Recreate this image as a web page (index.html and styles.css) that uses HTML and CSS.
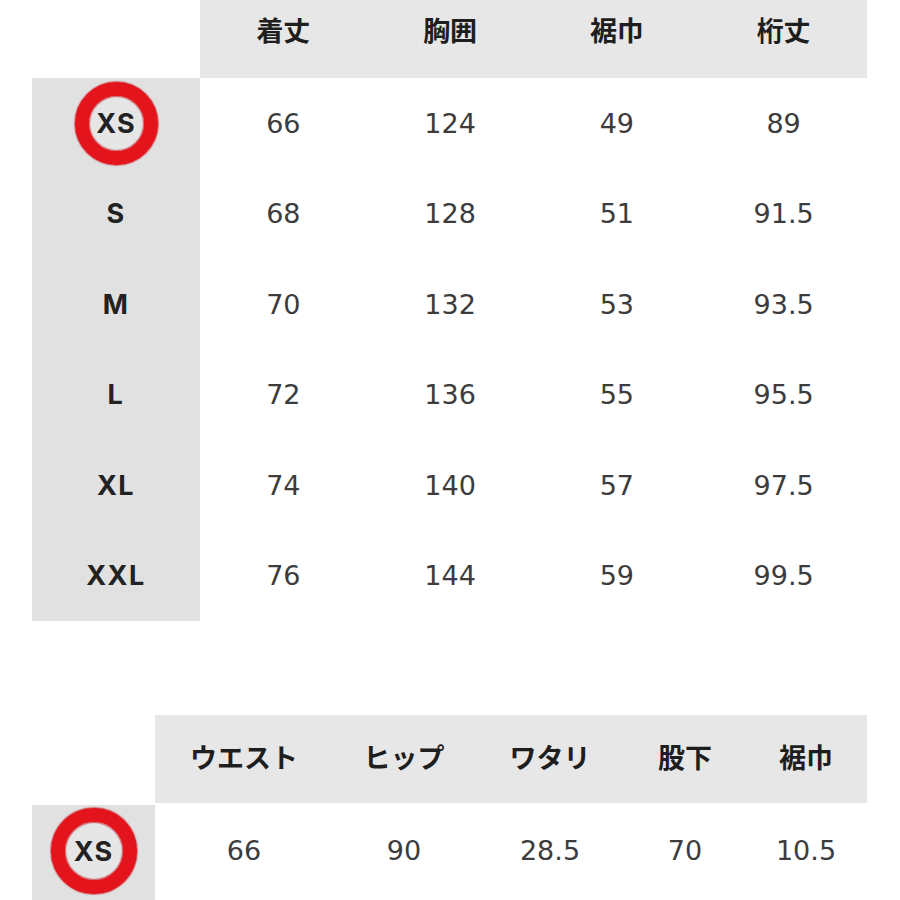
FILE: index.html
```html
<!DOCTYPE html>
<html lang="ja">
<head>
<meta charset="utf-8">
<link rel="stylesheet" href="styles.css">
</head>
<body>
<div class="page">
  <div class="tbl top">
    <div class="corner"></div>
    <div class="hd">着丈</div>
    <div class="hd">胸囲</div>
    <div class="hd">裾巾</div>
    <div class="hd">桁丈</div>

    <div class="lbl"><span class="ring">XS</span></div>
    <div class="num">66</div><div class="num">124</div><div class="num">49</div><div class="num">89</div>

    <div class="lbl">S</div>
    <div class="num">68</div><div class="num">128</div><div class="num">51</div><div class="num">91.5</div>

    <div class="lbl">M</div>
    <div class="num">70</div><div class="num">132</div><div class="num">53</div><div class="num">93.5</div>

    <div class="lbl">L</div>
    <div class="num">72</div><div class="num">136</div><div class="num">55</div><div class="num">95.5</div>

    <div class="lbl">XL</div>
    <div class="num">74</div><div class="num">140</div><div class="num">57</div><div class="num">97.5</div>

    <div class="lbl">XXL</div>
    <div class="num">76</div><div class="num">144</div><div class="num">59</div><div class="num">99.5</div>
  </div>

  <div class="tbl bottom">
    <div class="corner"></div>
    <div class="hd">ウエスト</div>
    <div class="hd">ヒップ</div>
    <div class="hd">ワタリ</div>
    <div class="hd">股下</div>
    <div class="hd">裾巾</div>

    <div class="lbl"><span class="ring">XS</span></div>
    <div class="num">66</div><div class="num">90</div><div class="num">28.5</div><div class="num">70</div><div class="num">10.5</div>
  </div>
</div>
</body>
</html>
```
FILE: styles.css
```css
html, body {
  margin: 0;
  padding: 0;
  background: #ffffff;
}

.page {
  width: 900px;
  height: 900px;
  overflow: hidden;
  padding-left: 32px;
  box-sizing: border-box;
}

.tbl {
  display: grid;
  width: 835px;
}

.top {
  grid-template-columns: 168px repeat(4, 1fr);
  grid-template-rows: 78px repeat(6, 90.5px);
}

.bottom {
  margin-top: 94px;
  grid-template-columns: 123px 178px 142px 150px 120px 122px;
  grid-template-rows: 88px 95px;
  row-gap: 2px;
}

.corner {
  background: transparent;
}

.hd {
  background: #e7e7e7;
  display: flex;
  justify-content: center;
  align-items: center;
  font-family: "Noto Sans CJK JP", sans-serif;
  font-weight: 700;
  font-size: 27px;
  color: #1e1e1e;
}

.top .hd {
  align-items: flex-start;
  padding-top: 10px;
}

.bottom .hd {
  padding-bottom: 6px;
}

.lbl {
  background: #e1e1e1;
  display: flex;
  justify-content: center;
  align-items: center;
  font-family: Inter, "Liberation Sans", sans-serif;
  font-weight: 700;
  font-size: 27px;
  letter-spacing: 1.5px;
  color: #222222;
}

.num {
  display: flex;
  justify-content: center;
  align-items: center;
  font-family: "DejaVu Sans", sans-serif;
  font-weight: 400;
  font-size: 27px;
  color: #3c3c3c;
}

.bottom .num {
  padding-bottom: 5px;
}

.ring {
  width: 55px;
  height: 55px;
  border: 14px solid #e3141c;
  border-radius: 50%;
  display: flex;
  justify-content: center;
  align-items: center;
  background: #e6e6e6;
  letter-spacing: 1px;
  box-shadow: 0 0 1px 1px rgba(200, 10, 20, 0.5), inset 0 0 1px 1px rgba(180, 10, 20, 0.6);
}

.bottom .ring {
  width: 58px;
  height: 58px;
  margin-bottom: 3px;
}
```
